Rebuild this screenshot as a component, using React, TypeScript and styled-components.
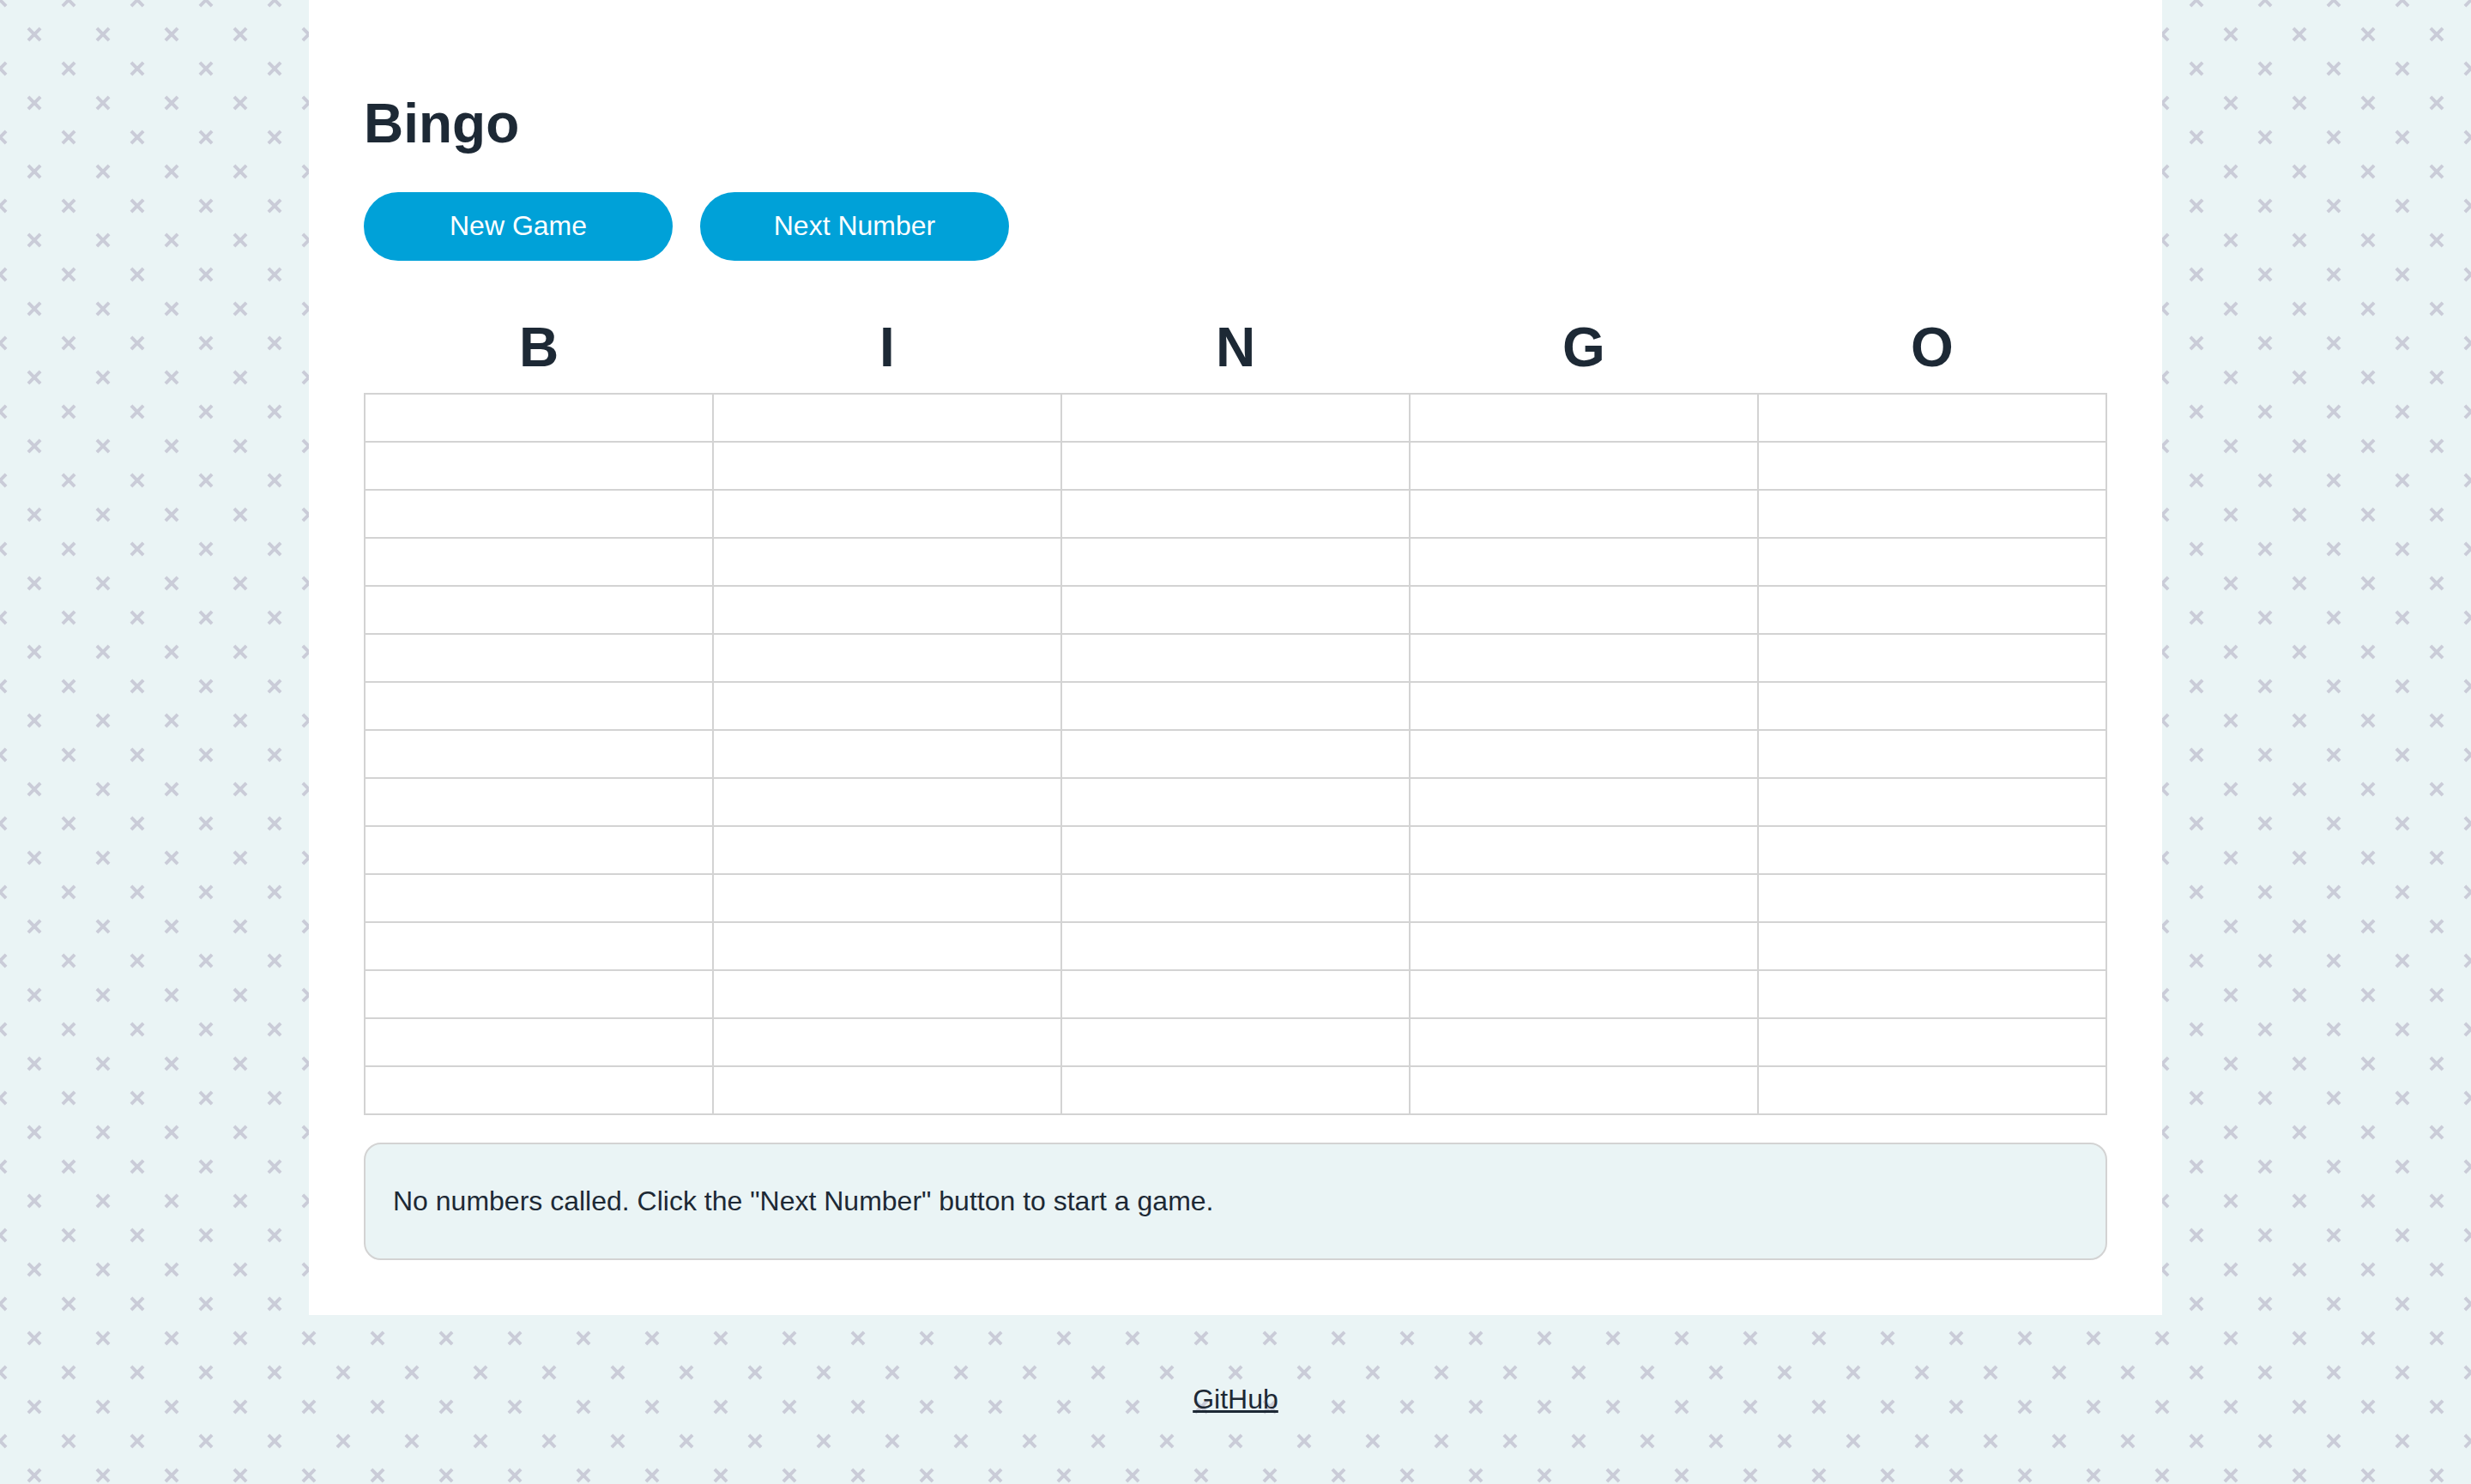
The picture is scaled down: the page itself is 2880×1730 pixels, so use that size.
import React, { useState } from 'react';
import styled, { createGlobalStyle } from 'styled-components';

const LETTERS = ['B', 'I', 'N', 'G', 'O'];
const PER_COLUMN = 15;

const crosses = encodeURIComponent(
  '<svg xmlns="http://www.w3.org/2000/svg" width="80" height="80" viewBox="0 0 40 40"><path fill="#9C92AC" fill-opacity="0.4" fill-rule="evenodd" d="M0 38.59l2.83-2.83 1.41 1.41L1.41 40H0v-1.41zM0 1.4l2.83 2.83 1.41-1.41L1.41 0H0v1.41zM38.59 40l-2.83-2.83 1.41-1.41L40 38.59V40h-1.41zM40 1.41l-2.83 2.83-1.41-1.41L38.59 0H40v1.41zM20 18.6l2.83-2.83 1.41 1.41L21.41 20l2.83 2.83-1.41 1.41L20 21.41l-2.83 2.83-1.41-1.41L18.59 20l-2.83-2.83 1.41-1.41L20 18.59z"/></svg>'
);

const GlobalStyle = createGlobalStyle`
  *, *::before, *::after {
    box-sizing: border-box;
  }

  body {
    margin: 0;
    background-color: #eaf4f5;
    background-image: url("data:image/svg+xml,${crosses}");
    color: #1d2935;
    font-family: Arial, 'Liberation Sans', sans-serif;
    font-size: 32px;
  }
`;

const Panel = styled.main`
  max-width: 2160px;
  margin: 0 auto;
  padding: 64px;
  background: #fff;
`;

const Title = styled.h1`
  margin: 43px 0;
  font-size: 64px;
  line-height: 74px;
`;

const Controls = styled.div`
  display: flex;
  flex-wrap: wrap;
  gap: 32px;
  margin-bottom: 48px;
`;

const Button = styled.button`
  min-width: 360px;
  height: 80px;
  padding: 0 32px 2px;
  border: 0;
  border-radius: 40px;
  background: #00a1d8;
  color: #fff;
  font: inherit;
  cursor: pointer;
`;

const Board = styled.table`
  width: 100%;
  margin-bottom: 32px;
  border-collapse: collapse;
  table-layout: fixed;
`;

const Letter = styled.th`
  padding: 16px 0;
  font-size: 64px;
  line-height: 74px;
`;

const Cell = styled.td`
  height: 56px;
  padding: 0;
  border: 2px solid #d3d3d3;
  text-align: center;
`;

const Message = styled.div`
  padding: 48px 32px;
  border: 2px solid #d3d3d3;
  border-radius: 20px;
  background: #eaf4f5;
  line-height: 37px;
`;

const Footer = styled.footer`
  padding: 80px 64px;
  line-height: 37px;
  text-align: center;
`;

const FooterLink = styled.a`
  color: inherit;
  text-decoration-thickness: 3px;
`;

export default function App() {
  const [called, setCalled] = useState<number[]>([]);

  const callNext = () => {
    const left = Array.from({ length: LETTERS.length * PER_COLUMN }, (_, i) => i + 1).filter(
      (n) => !called.includes(n)
    );
    if (left.length > 0) {
      setCalled([...called, left[Math.floor(Math.random() * left.length)]]);
    }
  };

  const last = called[called.length - 1];
  const message =
    last === undefined
      ? 'No numbers called. Click the "Next Number" button to start a game.'
      : `${LETTERS[Math.floor((last - 1) / PER_COLUMN)]} ${last}`;

  return (
    <>
      <GlobalStyle />
      <Panel>
        <Title>Bingo</Title>
        <Controls>
          <Button type="button" onClick={() => setCalled([])}>New Game</Button>
          <Button type="button" onClick={callNext}>Next Number</Button>
        </Controls>
        <Board>
          <thead>
            <tr>
              {LETTERS.map((letter) => (
                <Letter key={letter} scope="col">{letter}</Letter>
              ))}
            </tr>
          </thead>
          <tbody>
            {Array.from({ length: PER_COLUMN }, (_, row) => (
              <tr key={row}>
                {LETTERS.map((letter, column) => {
                  const value = column * PER_COLUMN + row + 1;
                  return <Cell key={letter}>{called.includes(value) ? value : null}</Cell>;
                })}
              </tr>
            ))}
          </tbody>
        </Board>
        <Message role="status">{message}</Message>
      </Panel>
      <Footer>
        <FooterLink href="https://github.com">GitHub</FooterLink>
      </Footer>
    </>
  );
}
